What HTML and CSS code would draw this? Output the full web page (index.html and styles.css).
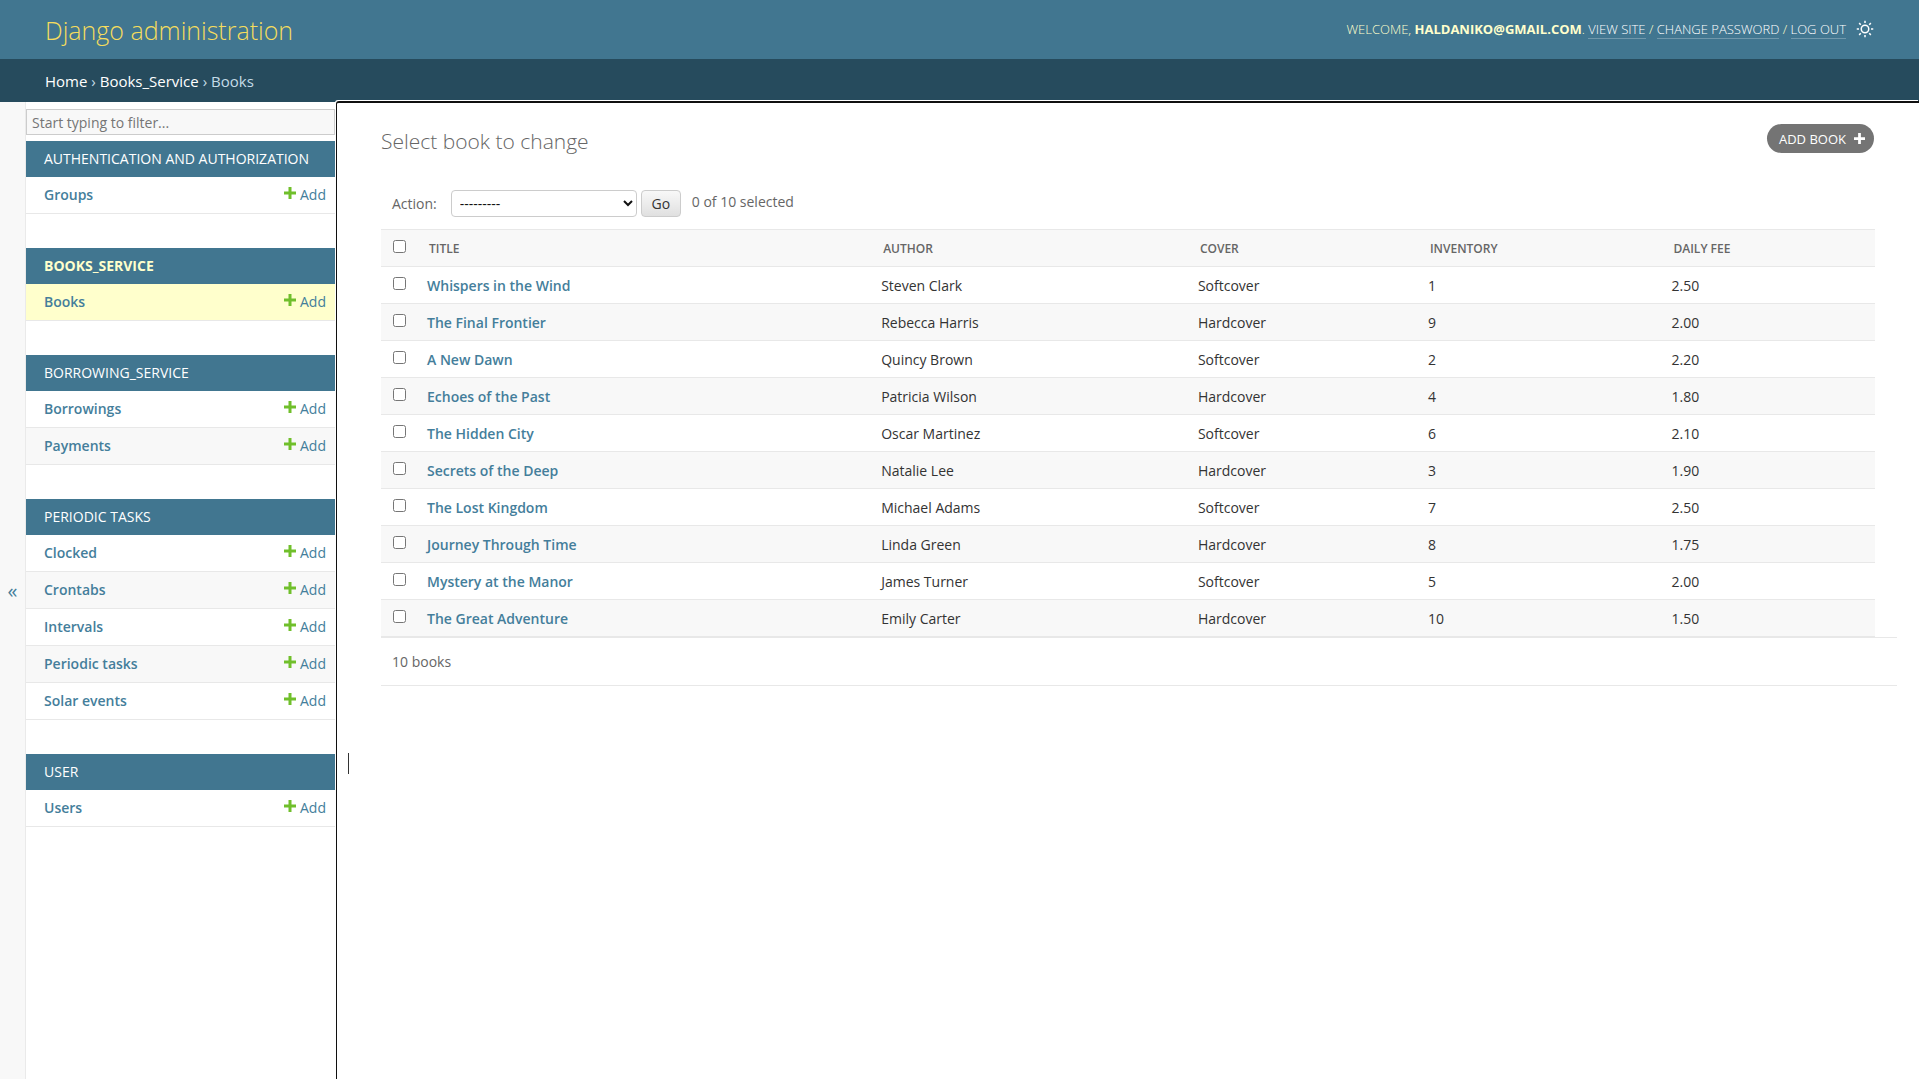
FILE: index.html
```html
<!DOCTYPE html>
<html lang="en">
<head>
<meta charset="utf-8">
<meta name="viewport" content="width=device-width, initial-scale=1">
<title>Select book to change | Django site admin</title>
<link rel="stylesheet" href="styles.css">
</head>
<body>
<svg class="sprite" aria-hidden="true">
  <symbol id="plus" viewBox="0 0 12 12"><path d="M4.5 0h3v4.5H12v3H7.5V12h-3V7.5H0v-3h4.5z"/></symbol>
</svg>
<header class="header">
  <a class="branding" href="#">Django administration</a>
  <div class="user-tools">
    <span>Welcome, <strong>haldaniko@gmail.com</strong>. <a href="#">View site</a> / <a href="#">Change password</a> / <a href="#">Log out</a></span>
    <button class="theme-toggle" type="button" aria-label="Toggle theme">
      <svg viewBox="0 0 24 24" width="18" height="18" fill="none" stroke="currentColor" stroke-width="2"><circle cx="12" cy="12" r="5"/><path d="M12 1v3M12 20v3M1 12h3M20 12h3M4.2 4.2l2.2 2.2M17.6 17.6l2.2 2.2M4.2 19.8l2.2-2.2M17.6 6.4l2.2-2.2"/></svg>
    </button>
  </div>
</header>
<nav class="breadcrumbs" aria-label="Breadcrumbs"><a href="#">Home</a> › <a href="#">Books_Service</a> › Books</nav>
<div class="main">
  <button class="nav-toggle" type="button" aria-label="Toggle navigation">«</button>
  <nav class="sidebar" aria-label="Sidebar">
    <input class="filter" type="search" placeholder="Start typing to filter..." aria-label="Filter navigation items">
    <section class="module">
      <h2><a href="#">Authentication and Authorization</a></h2>
      <ul>
        <li><a class="model" href="#">Groups</a><a class="add" href="#"><svg><use href="#plus"/></svg>Add</a></li>
      </ul>
    </section>
    <section class="module current">
      <h2><a href="#">Books_Service</a></h2>
      <ul>
        <li><a class="model" href="#">Books</a><a class="add" href="#"><svg><use href="#plus"/></svg>Add</a></li>
      </ul>
    </section>
    <section class="module">
      <h2><a href="#">Borrowing_Service</a></h2>
      <ul>
        <li><a class="model" href="#">Borrowings</a><a class="add" href="#"><svg><use href="#plus"/></svg>Add</a></li>
        <li><a class="model" href="#">Payments</a><a class="add" href="#"><svg><use href="#plus"/></svg>Add</a></li>
      </ul>
    </section>
    <section class="module">
      <h2><a href="#">Periodic Tasks</a></h2>
      <ul>
        <li><a class="model" href="#">Clocked</a><a class="add" href="#"><svg><use href="#plus"/></svg>Add</a></li>
        <li><a class="model" href="#">Crontabs</a><a class="add" href="#"><svg><use href="#plus"/></svg>Add</a></li>
        <li><a class="model" href="#">Intervals</a><a class="add" href="#"><svg><use href="#plus"/></svg>Add</a></li>
        <li><a class="model" href="#">Periodic tasks</a><a class="add" href="#"><svg><use href="#plus"/></svg>Add</a></li>
        <li><a class="model" href="#">Solar events</a><a class="add" href="#"><svg><use href="#plus"/></svg>Add</a></li>
      </ul>
    </section>
    <section class="module">
      <h2><a href="#">User</a></h2>
      <ul>
        <li><a class="model" href="#">Users</a><a class="add" href="#"><svg><use href="#plus"/></svg>Add</a></li>
      </ul>
    </section>
  </nav>
  <main class="content">
    <div class="title-row">
      <h1>Select book to change</h1>
      <a class="add-book" href="#">Add book <svg><use href="#plus"/></svg></a>
    </div>
    <form class="changelist">
      <div class="actions">
        <label for="action">Action:</label>
        <select id="action"><option>---------</option><option>Delete selected books</option></select>
        <button class="go" type="button">Go</button>
        <span class="counter">0 of 10 selected</span>
      </div>
      <table class="results">
        <colgroup><col class="c-check"><col class="c-title"><col class="c-author"><col class="c-cover"><col class="c-inventory"><col></colgroup>
        <thead>
          <tr><th scope="col"><input type="checkbox" aria-label="Select all"></th><th scope="col">Title</th><th scope="col">Author</th><th scope="col">Cover</th><th scope="col">Inventory</th><th scope="col">Daily fee</th></tr>
        </thead>
        <tbody>
          <tr><td><input type="checkbox" aria-label="Select Whispers in the Wind"></td><td><a href="#">Whispers in the Wind</a></td><td>Steven Clark</td><td>Softcover</td><td>1</td><td>2.50</td></tr>
          <tr><td><input type="checkbox" aria-label="Select The Final Frontier"></td><td><a href="#">The Final Frontier</a></td><td>Rebecca Harris</td><td>Hardcover</td><td>9</td><td>2.00</td></tr>
          <tr><td><input type="checkbox" aria-label="Select A New Dawn"></td><td><a href="#">A New Dawn</a></td><td>Quincy Brown</td><td>Softcover</td><td>2</td><td>2.20</td></tr>
          <tr><td><input type="checkbox" aria-label="Select Echoes of the Past"></td><td><a href="#">Echoes of the Past</a></td><td>Patricia Wilson</td><td>Hardcover</td><td>4</td><td>1.80</td></tr>
          <tr><td><input type="checkbox" aria-label="Select The Hidden City"></td><td><a href="#">The Hidden City</a></td><td>Oscar Martinez</td><td>Softcover</td><td>6</td><td>2.10</td></tr>
          <tr><td><input type="checkbox" aria-label="Select Secrets of the Deep"></td><td><a href="#">Secrets of the Deep</a></td><td>Natalie Lee</td><td>Hardcover</td><td>3</td><td>1.90</td></tr>
          <tr><td><input type="checkbox" aria-label="Select The Lost Kingdom"></td><td><a href="#">The Lost Kingdom</a></td><td>Michael Adams</td><td>Softcover</td><td>7</td><td>2.50</td></tr>
          <tr><td><input type="checkbox" aria-label="Select Journey Through Time"></td><td><a href="#">Journey Through Time</a></td><td>Linda Green</td><td>Hardcover</td><td>8</td><td>1.75</td></tr>
          <tr><td><input type="checkbox" aria-label="Select Mystery at the Manor"></td><td><a href="#">Mystery at the Manor</a></td><td>James Turner</td><td>Softcover</td><td>5</td><td>2.00</td></tr>
          <tr><td><input type="checkbox" aria-label="Select The Great Adventure"></td><td><a href="#">The Great Adventure</a></td><td>Emily Carter</td><td>Hardcover</td><td>10</td><td>1.50</td></tr>
        </tbody>
      </table>
      <p class="paginator">10 books</p>
    </form>
    <span class="caret" aria-hidden="true"></span>
  </main>
</div>
</body>
</html>
```
FILE: styles.css
```css
:root {
  --primary: #417690;
  --dark: #264b5d;
  --cream: #ffffcc;
  --link: #447e9b;
  --quiet: #666666;
  --hairline: #e8e8e8;
  --darkened: #f8f8f8;
}

* { box-sizing: border-box; }

body {
  margin: 0;
  min-height: 100vh;
  display: flex;
  flex-direction: column;
  background: #fff;
  color: #333;
  font: 14px/20px "Open Sans", "Noto Sans", sans-serif;
}

a { color: var(--link); text-decoration: none; }
button, input, select { font: inherit; }
.sprite { position: absolute; width: 0; height: 0; }

.header {
  display: flex;
  justify-content: space-between;
  align-items: center;
  height: 59px;
  padding: 0 45px;
  background: var(--primary);
  color: var(--cream);
}
.branding { color: #f5dd5d; font-size: 25px; line-height: 32px; font-weight: 300; }
.user-tools {
  display: flex;
  align-items: center;
  gap: 10px;
  padding-bottom: 2px;
  font-size: 13px;
  line-height: 14px;
  font-weight: 300;
  text-transform: uppercase;
}
.user-tools a { color: #fff; border-bottom: 1px solid rgba(255, 255, 255, 0.25); }
.user-tools strong { font-weight: 700; }
.theme-toggle { display: flex; padding: 0; border: 0; background: none; color: #fff; }

.breadcrumbs {
  padding: 12px 45px 11px;
  background: var(--dark);
  color: #c4dce8;
  font-size: 15px;
}
.breadcrumbs a { color: #fff; }

.main { flex: 1; display: flex; }
.nav-toggle {
  flex: 0 0 26px;
  padding: 0;
  border: 0;
  border-right: 1px solid #eaeaea;
  background: var(--darkened);
  color: var(--link);
  font-size: 20px;
}
.sidebar { flex: 0 0 309px; padding-top: 7px; }
.filter {
  display: block;
  width: 100%;
  height: 26px;
  margin-bottom: 6px;
  padding: 0 5px;
  appearance: none;
  border: 1px solid #ccc;
  border-radius: 0;
  background: var(--darkened);
}
.filter::placeholder { color: #757575; }

.module { margin-bottom: 34px; }
.module h2 {
  margin: 0;
  padding: 8px 18px;
  background: var(--primary);
  font-size: 14px;
  font-weight: 400;
  text-transform: uppercase;
}
.module h2 a { color: #fff; }
.module ul { margin: 0; padding: 0; list-style: none; }
.module li {
  display: flex;
  justify-content: space-between;
  padding: 8px 9px 8px 18px;
  border-bottom: 1px solid var(--hairline);
}
.module li:nth-child(even) { background: var(--darkened); }
.model { font-weight: 600; }
.add { display: flex; gap: 4px; }
.add svg { width: 12px; height: 12px; margin-top: 2px; fill: #70bf2b; }
.current h2 { font-weight: 700; }
.current h2 a { color: var(--cream); }
.current li { background: var(--cream); }

.content {
  position: relative;
  flex: 1;
  margin: -1px 0 0 1px;
  padding: 21px 22px 30px 44px;
  border: solid #101010;
  border-width: 2px 0 0 1px;
  border-top-left-radius: 3px;
  background: #fff;
  box-shadow: -1px -1px 0 #fff;
}
.title-row {
  display: flex;
  justify-content: space-between;
  align-items: flex-start;
  padding-right: 22px;
}
.content h1 { margin: 4px 0 0; color: var(--quiet); font-size: 21px; line-height: 26px; font-weight: 300; }
.add-book {
  display: flex;
  align-items: center;
  gap: 8px;
  height: 29px;
  margin-right: 1px;
  padding: 0 9px 0 12px;
  border-radius: 15px;
  background: #747474;
  color: #fff;
  font-size: 13px;
  text-transform: uppercase;
}
.add-book svg { width: 11px; height: 11px; margin-bottom: 1px; fill: #fff; }

.actions {
  display: flex;
  align-items: center;
  height: 75px;
  padding: 24px 11px 0;
  color: var(--quiet);
}
.actions select {
  width: 186px;
  height: 27px;
  margin: 0 4px 0 14px;
  padding: 0 4px;
  border: 1px solid #ccc;
  border-radius: 4px;
  background: #fff;
  color: #111;
}
.go {
  width: 40px;
  height: 27px;
  margin-right: 11px;
  padding: 0;
  border: 1px solid #ccc;
  border-radius: 4px;
  background: linear-gradient(#f8f8f8, #e0e0e0);
  color: #333;
}
.counter { padding-bottom: 4px; }

.results { width: calc(100% - 22px); table-layout: fixed; border-collapse: collapse; }
.c-check { width: 38px; }
.c-title { width: 30.4%; }
.c-author { width: 21.2%; }
.c-cover { width: 15.4%; }
.c-inventory { width: 16.3%; }
.results th, .results td {
  height: 37px;
  padding: 1px 8px 0;
  border-bottom: 1px solid var(--hairline);
  text-align: left;
}
.results th {
  padding: 1px 10px 0;
  border-top: 1px solid var(--hairline);
  background: var(--darkened);
  color: var(--quiet);
  font-size: 12px;
  font-weight: 600;
  text-transform: uppercase;
}
.results th:first-child, .results td:first-child { padding: 8px 8px 0 12px; vertical-align: top; }
.results input { display: block; width: 13px; height: 13px; margin: 2px 0 0; }
.results tbody tr:nth-child(even) { background: var(--darkened); }
.results td a { font-weight: 600; }

.paginator {
  margin: 0;
  padding: 14px 11px 13px;
  border: solid var(--hairline);
  border-width: 1px 0;
  color: var(--quiet);
}

/* text caret parked in the left gutter */
.caret { position: absolute; left: 11px; top: 650px; width: 1px; height: 21px; background: #333; }
```
